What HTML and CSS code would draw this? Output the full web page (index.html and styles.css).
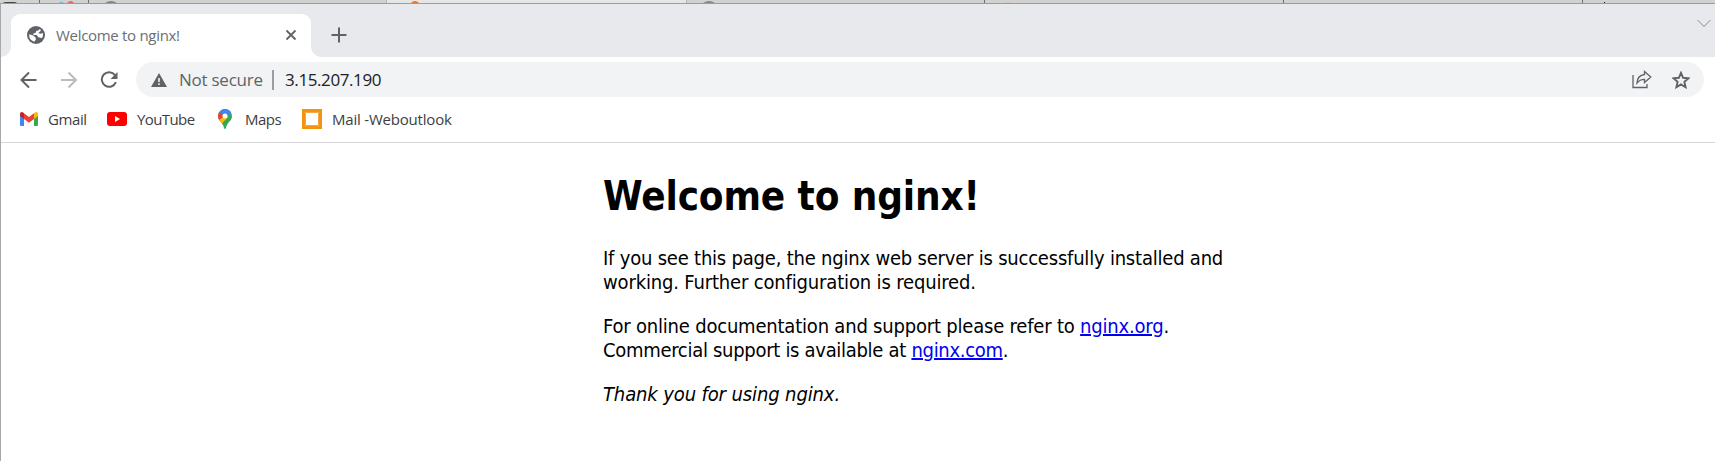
FILE: index.html
```
<!DOCTYPE html>
<html lang="en">
<head>
<meta charset="utf-8">
<title>Welcome to nginx!</title>
<link rel="stylesheet" href="styles.css">
</head>
<body>
<div class="backdrop">
  <svg width="1715" height="3" viewBox="0 0 1715 3">
    <rect x="387" width="299" height="3" fill="#e6e6e6"/>
    <path d="M39.500 0v3M88.500 0v3M984.500 0v3M1283.500 0v3M1582.500 0v3" stroke="#6e6e6e"/>
    <path d="M386.500 0v3M686.500 0v3" stroke="#b4b4b4"/>
    <path d="M3 3q1-1 3-1h8q2 0 3 1z" fill="#444"/>
    <path d="M59 3q2-3 5 0z" fill="#75bfd0"/><path d="M67 3q4-4 7 0z" fill="#e26a6a"/>
    <path d="M105 3q6-4 12 0zM703 3q6-4 12 0z" fill="#868686"/>
    <path d="M411 3q4-4 8 0z" fill="#ee7420"/>
    <path d="M1005 3q3-1 6 0z" fill="#dcb56b"/><rect x="1604" y="2" width="1" height="1" fill="#222"/>
  </svg>
</div>
<div class="window">
  <div class="tabstrip">
    <div class="tab">
      <svg class="globe" width="18" height="18" viewBox="0 0 18 18"><circle cx="9" cy="9" r="9" fill="#5f6368"/><path d="M2.200 8.300 6.200 9.500 8.400 11.300 9 13.300 7.300 15.700A7 7 0 0 1 2.200 8.300ZM8 2.100Q10.500 1.700 12.600 2.900L11.600 4.300 9.200 5.100 8.700 6.800 6.300 7.500 6.400 9.100H9.600L11.400 11.300 14.500 12 15.300 11.700Q16.500 9.500 15.900 7L13.400 7.800 11.200 7 13.100 5.500 14 4Q11.200 1.300 8 2.100Z" fill="#fff"/></svg>
      <span class="tab-title">Welcome to nginx!</span>
      <svg class="close" width="12" height="12" viewBox="0 0 12 12"><path d="m1.500 1.500 9 9m0-9-9 9" stroke="#5f6368" stroke-width="1.800"/></svg>
    </div>
    <svg class="plus" width="16" height="16" viewBox="0 0 16 16"><path d="M8 .5v15M.5 8h15" stroke="#5f6368" stroke-width="2"/></svg>
    <svg class="chevron" width="14" height="9" viewBox="0 0 14 9"><path d="m.5 1 6.500 6.500L13.500 1" fill="none" stroke="#888b90"/></svg>
  </div>
  <div class="toolbar">
    <svg class="back" width="18" height="18" viewBox="0 0 18 18"><path d="M16.500 9H2M9 1.500 1.500 9 9 16.500" fill="none" stroke="#5f6368" stroke-width="2"/></svg>
    <svg class="forward" width="18" height="18" viewBox="0 0 18 18"><path d="M1 9h14.500M8.500 1.500 16 9l-7.500 7.500" fill="none" stroke="#bbbcbe" stroke-width="2"/></svg>
    <svg class="reload" width="18" height="18" viewBox="0 0 18 18"><path d="M15 4.200A7.300 7.300 0 1 0 15.900 11.200" fill="none" stroke="#5f6368" stroke-width="2"/><path d="M17.500 1v7h-7Z" fill="#5f6368"/></svg>
    <div class="omnibox">
      <svg class="warning" width="16" height="14" viewBox="0 0 16 14"><path d="M8 0l8 14H0Z" fill="#5f6368"/><path d="M8 5v4M8 10.300v1.700" stroke="#f1f3f4" stroke-width="1.600"/></svg>
      <span class="security">Not secure</span>
      <span class="separator"></span>
      <span class="address">3.15.207.190</span>
      <svg class="share" width="20" height="19" viewBox="0 0 20 19"><path d="M1 5v12.500h14V14" fill="none" stroke="#5f6368" stroke-width="1.300"/><path d="M12.500 1.500 18.800 7l-6.300 5.500V9.300Q8 9.200 5 13q.3-7.600 7.500-8.500Z" fill="none" stroke="#5f6368" stroke-width="1.300"/></svg>
      <svg class="star" width="18" height="18" viewBox="0 0 18 18"><path d="m9 1.800 2.100 5 5.400.5-4.100 3.600 1.200 5.300L9 13.400l-4.600 2.800 1.200-5.300-4.100-3.600 5.400-.5Z" fill="none" stroke="#5f6368" stroke-width="1.900"/></svg>
    </div>
  </div>
  <div class="bookmarks">
    <a class="bookmark bm-gmail"><svg width="18" height="14" viewBox="0 0 18 14"><path d="M0 2v10.700Q0 14 1.300 14H4V5Z" fill="#4285f4"/><path d="M14 5v9h2.700Q18 14 18 12.700V2Z" fill="#34a853"/><path d="M14 1.300V7l4-3V2Q18 0 16.300 0 15.500 0 14 1.300Z" fill="#fbbc04"/><path d="M4 1.300V7l5 3.700L14 7V1.300L9 5Z" fill="#ea4335"/><path d="M4 1.300V7L0 4V2Q0 0 1.700 0 2.500 0 4 1.300Z" fill="#c5221f"/></svg><span>Gmail</span></a>
    <a class="bookmark bm-youtube"><svg width="20" height="14" viewBox="0 0 20 14"><rect width="20" height="14" rx="3" fill="red"/><path d="m8 4 5 3-5 3Z" fill="#fff"/></svg><span>YouTube</span></a>
    <a class="bookmark bm-maps"><svg width="14" height="20" viewBox="0 0 14 20"><defs><clipPath id="pin"><path d="M7 0a7 7 0 0 1 7 7c0 5-4.700 6-6 11.800Q7.700 20 7 20t-1-1.200C4.700 13 0 12 0 7a7 7 0 0 1 7-7Z"/></clipPath></defs><g clip-path="url(#pin)"><path d="M0 0h14v20H0Z" fill="#34a853"/><path d="M1 2 4 0h10v3L7 9Z" fill="#4285f4"/><path d="M0 12 7 5l3 3-7.500 8Z" fill="#fbbc04"/><path d="M0 2.500 7 7 1 11H0Z" fill="#ea4335"/></g><circle cx="7" cy="7" r="2.500" fill="#fff"/></svg><span>Maps</span></a>
    <a class="bookmark bm-mail"><svg width="20" height="20" viewBox="0 0 20 20"><path d="M1.500 1.500h17v17h-17Z" fill="#fff" stroke="#f4930f" stroke-width="3"/><path d="M3.500 3.500h13v13h-13Z" fill="none" stroke="#f6a640"/></svg><span>Mail -Weboutlook</span></a>
  </div>
  <main class="page">
    <h1>Welcome to nginx!</h1>
    <p><span class="l1">If you see this page, the nginx web server is successfully installed and</span><br><span class="l2">working. Further configuration is required.</span></p>
    <p><span class="l3">For online documentation and support please refer to <a href="#">nginx.org</a>.</span><br><span class="l4">Commercial support is available at <a href="#">nginx.com</a>.</span></p>
    <p><em>Thank you for using nginx.</em></p>
  </main>
</div>
</body>
</html>
```
FILE: styles.css
```
* { box-sizing: border-box; }
body { margin: 0; width: 1715px; height: 461px; overflow: hidden; background: #fff; }
svg { display: block; flex: none; }
.backdrop { height: 3px; background: #d1d1d1; }
.window { height: 458px; border-left: 1px solid #a8a8aa; border-top: 1px solid #9c9ca0; font-family: "Open Sans", sans-serif; }
.tabstrip { display: flex; height: 53px; padding: 10px 4px 0 10px; background: radial-gradient(circle at 0 0, #e8e9ed 9.500px, transparent 10px) 0 43px / 10px 10px no-repeat, linear-gradient(#e8e9ed, #e8e9ed) 0 0 / 10px 43px no-repeat, linear-gradient(#e8e9ed, #e8e9ed) 10px 0 no-repeat; }
.tab { position: relative; display: flex; align-items: center; width: 300px; height: 43px; padding: 0 14px 1px 16px; border-radius: 9px 9px 0 0; background: #fff; }
.tab::after { content: ""; position: absolute; left: 100%; bottom: 0; width: 10px; height: 10px; background: radial-gradient(circle at 100% 0, transparent 9.500px, #fff 10px); }
.tab-title { margin: -1px 0 0 11px; font-size: 15px; letter-spacing: -.3px; color: #6b6e73; white-space: nowrap; }
.close { margin-left: auto; }
.plus { margin: 13px 0 0 20px; }
.chevron { margin: 5px 0 0 auto; }
.toolbar { display: flex; align-items: center; height: 45px; padding: 0 11px 0 19px; }
.forward { margin-left: 22px; }
.reload { margin-left: 22px; }
.omnibox { display: flex; align-items: center; flex: 1; height: 35px; margin-left: 18px; padding: 0 14px 0 15px; border-radius: 18px; background: #f1f3f4; font-size: 17px; white-space: nowrap; }
.security { width: 84px; margin-left: 12px; letter-spacing: -.25px; color: #5f6368; }
.separator { width: 2px; height: 20px; margin-left: 9px; background: #9a9da1; }
.address { margin-left: 11px; letter-spacing: -.4px; color: #202124; }
.share { margin-left: auto; }
.star { margin-left: 20px; }
.bookmarks { display: flex; align-items: center; height: 41px; padding: 0 0 6px 19px; border-bottom: 1px solid #d6d6d8; font-size: 15px; color: #3c4043; }
.bookmark { display: flex; align-items: center; gap: 10px; white-space: nowrap; }
.bookmark span { margin-top: -1px; }
.bm-gmail { width: 87px; letter-spacing: -.4px; }
.bm-youtube { width: 111px; letter-spacing: -.6px; }
.bm-maps { width: 84px; gap: 13px; letter-spacing: -.5px; }
.bm-mail { letter-spacing: -.2px; }
.page { width: 656px; margin: 0 0 0 602px; padding-top: 29px; font-family: "DejaVu Sans Condensed", "DejaVu Sans", sans-serif; font-stretch: condensed; color: #000; white-space: nowrap; }
h1 { margin: 0; font-size: 40px; line-height: 48px; letter-spacing: -.12px; }
p { margin: 20px 0 0; font-size: 20px; line-height: 24px; }
h1 + p { margin-top: 26px; }
.page a { color: #00e; text-decoration: underline; text-decoration-thickness: 2px; }
.l1 { letter-spacing: -.21px; }
.l2 { letter-spacing: -.16px; }
.l3 { letter-spacing: -.2px; }
.l4 { letter-spacing: -.3px; }
em { letter-spacing: -.12px; }
```
